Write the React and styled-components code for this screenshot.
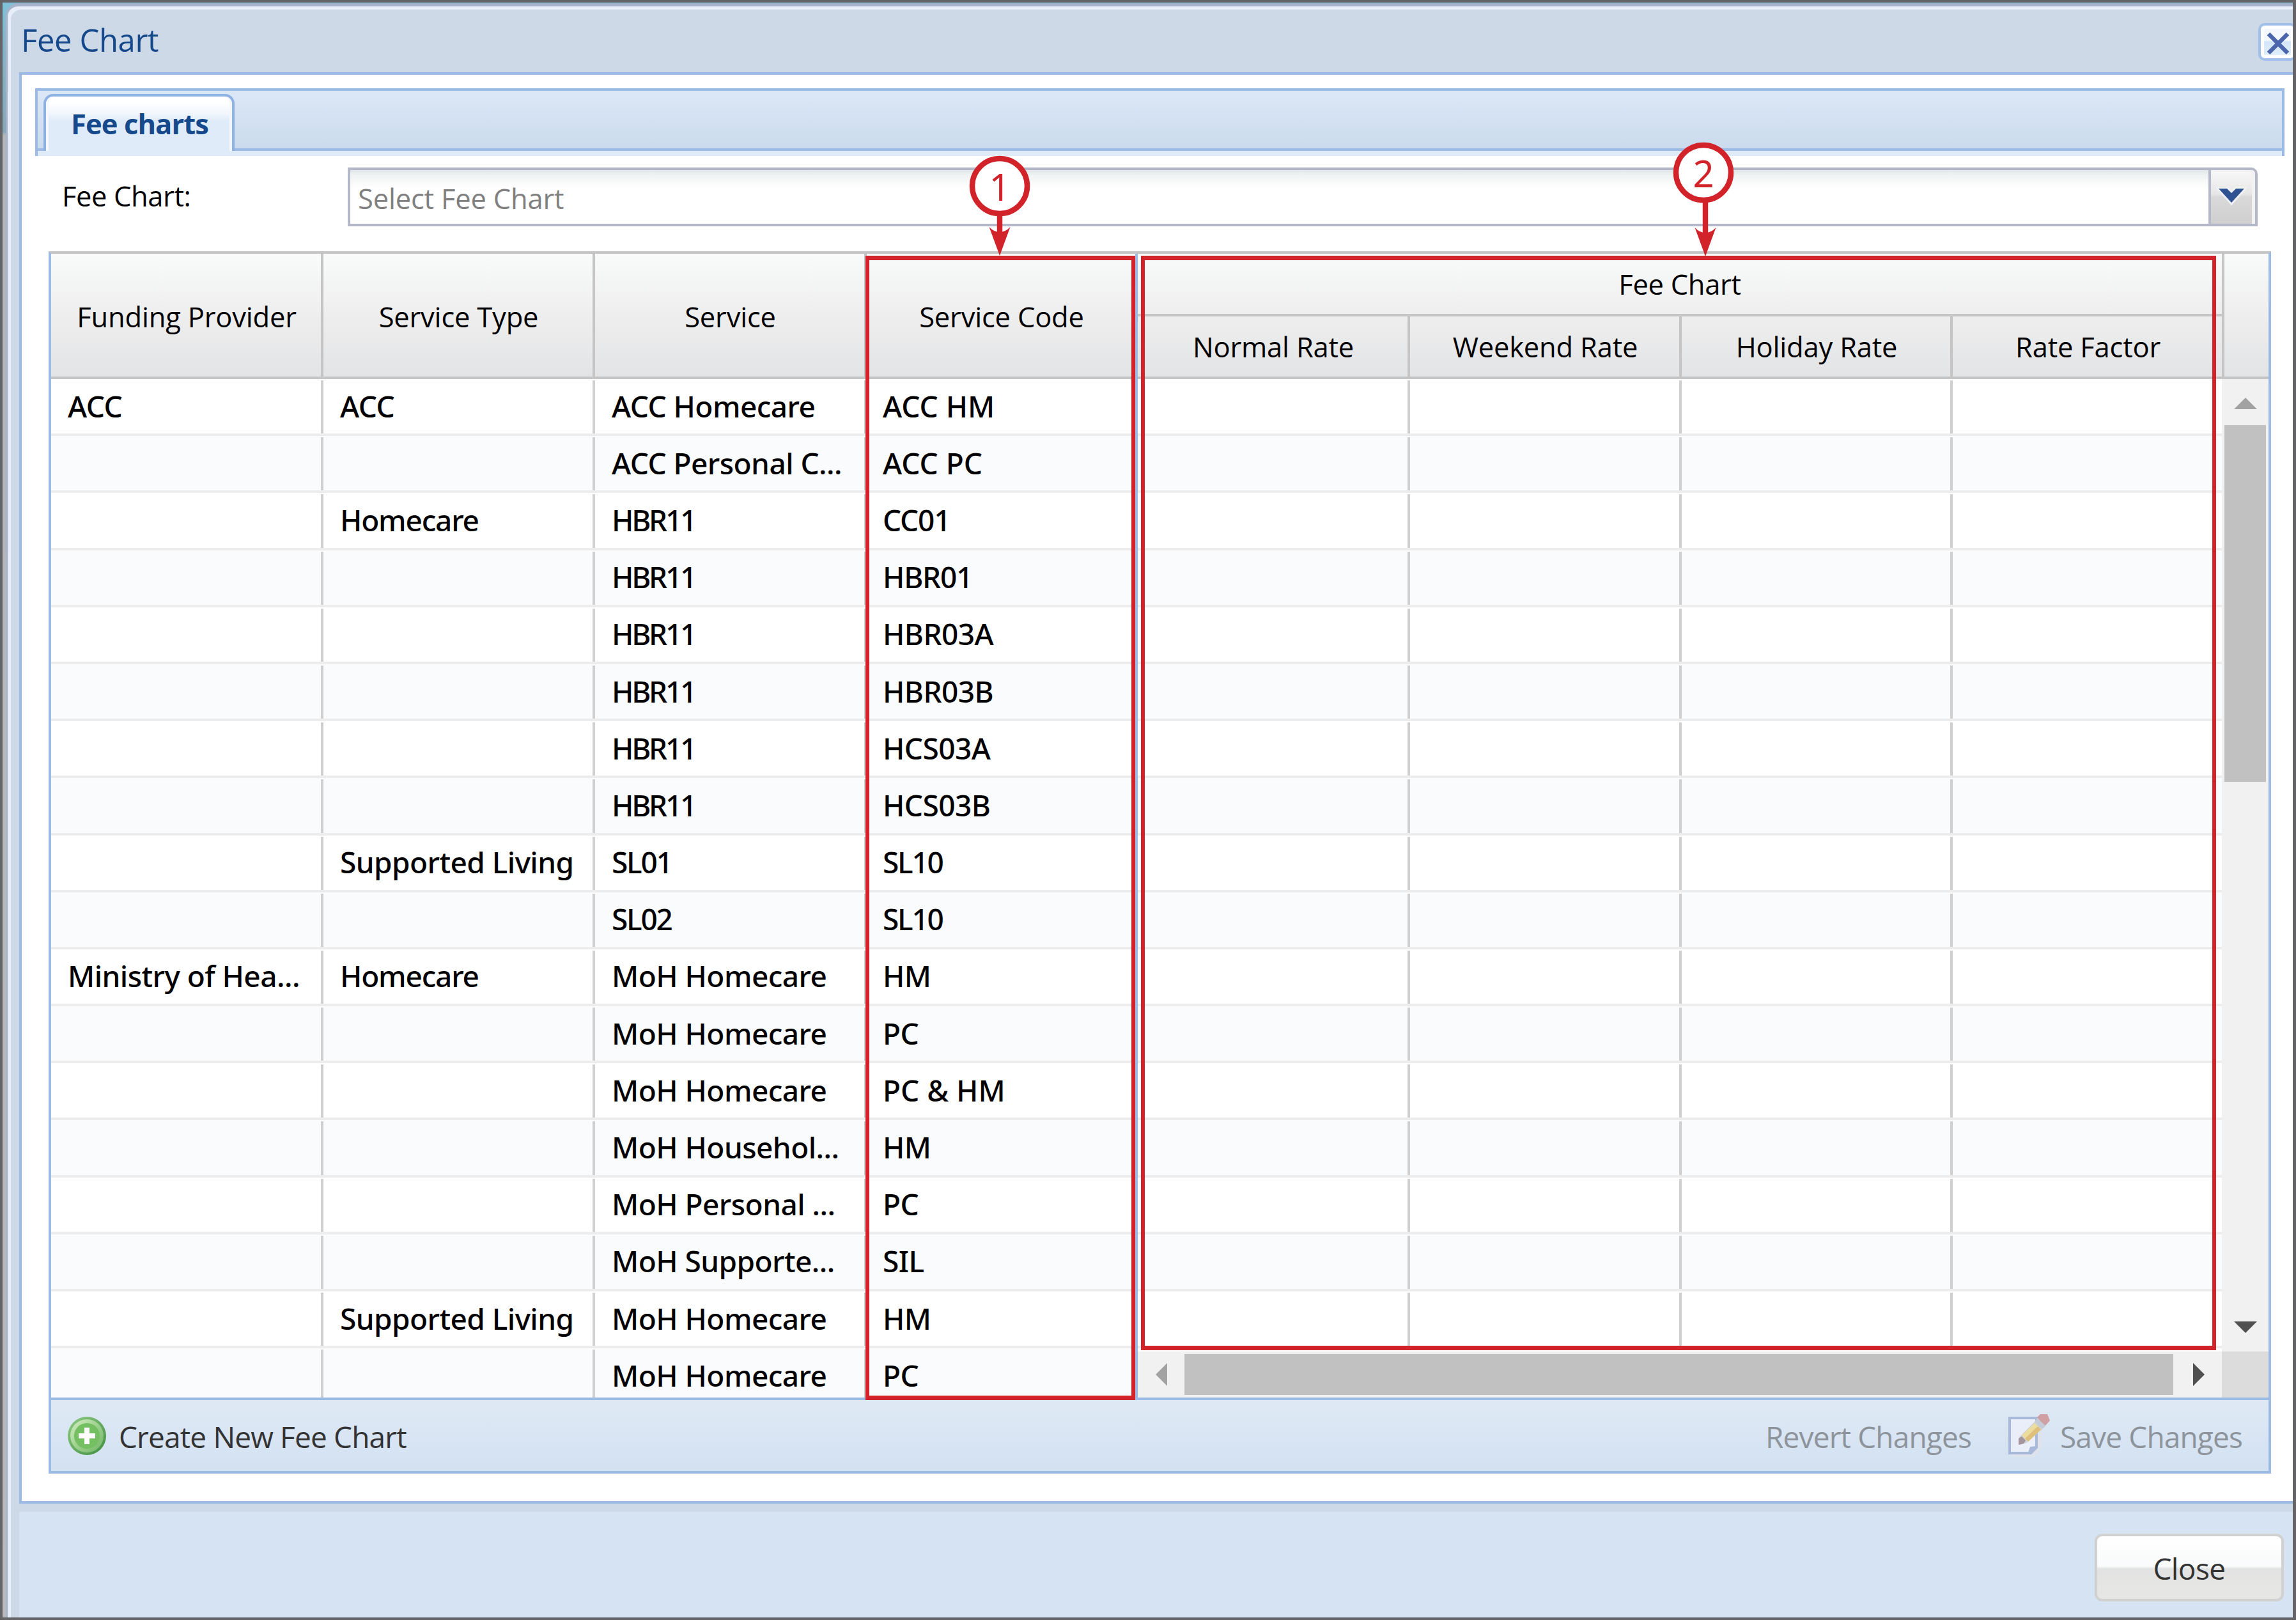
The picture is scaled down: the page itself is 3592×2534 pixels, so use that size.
import React from "react";
import styled, { createGlobalStyle, css } from "styled-components";

const rows = [
  ["ACC", "ACC", "ACC Homecare", "ACC HM"],
  ["", "", "ACC Personal C...", "ACC PC"],
  ["", "Homecare", "HBR11", "CC01"],
  ["", "", "HBR11", "HBR01"],
  ["", "", "HBR11", "HBR03A"],
  ["", "", "HBR11", "HBR03B"],
  ["", "", "HBR11", "HCS03A"],
  ["", "", "HBR11", "HCS03B"],
  ["", "Supported Living", "SL01", "SL10"],
  ["", "", "SL02", "SL10"],
  ["Ministry of Hea...", "Homecare", "MoH Homecare", "HM"],
  ["", "", "MoH Homecare", "PC"],
  ["", "", "MoH Homecare", "PC & HM"],
  ["", "", "MoH Househol...", "HM"],
  ["", "", "MoH Personal ...", "PC"],
  ["", "", "MoH Supporte...", "SIL"],
  ["", "Supported Living", "MoH Homecare", "HM"],
  ["", "", "MoH Homecare", "PC"],
];

const lockedHeaders = [
  "Funding Provider",
  "Service Type",
  "Service",
  "Service Code",
];
const rateHeaders = [
  "Normal Rate",
  "Weekend Rate",
  "Holiday Rate",
  "Rate Factor",
];

function tracking(text) {
  if (text.endsWith("11")) return "-3.2px";
  if (/^SL\d/.test(text)) return "-2.2px";
  if (/^\w+01$/.test(text)) return "-1.2px";
  if (text === "Homecare") return "-1.2px";
  if (/ (HM|PC)$/.test(text)) return "0";
  return "-0.55px";
}

function AddIcon() {
  return (
    <svg width="60" height="62" viewBox="0 0 60 62">
      <defs>
        <linearGradient id="addRim" x1="0" y1="0" x2="1" y2="1">
          <stop offset="0" stopColor="#8fcb83" />
          <stop offset="1" stopColor="#3f8f40" />
        </linearGradient>
        <linearGradient id="addRing" x1="0" y1="0" x2="1" y2="1">
          <stop offset="0" stopColor="#d3eec6" />
          <stop offset="0.5" stopColor="#9ed18d" />
          <stop offset="1" stopColor="#6fb565" />
        </linearGradient>
      </defs>
      <circle cx="30" cy="31" r="30" fill="url(#addRim)" />
      <circle cx="30" cy="31" r="26" fill="url(#addRing)" />
      <circle cx="30" cy="31" r="20" fill="#74bf61" />
      <path d="M26 18h8v9h9v8h-9v9h-8v-9h-9v-8h9z" fill="#fff" />
    </svg>
  );
}

function EditIcon() {
  return (
    <svg width="66" height="68" viewBox="0 0 66 68">
      <path d="M6 8h48v41L42 67H6z" fill="#dfe3ec" />
      <path d="M3 6h42v46L35 61H3z" fill="#e9eef9" stroke="#a9b9d9" strokeWidth="4" />
      <path d="M45 50v5l-8 8h-6l4-12z" fill="#a9b9d9" />
      <path d="M18 36l29-29 12 12-30 26-11 3z" fill="#cfd0d6" />
      <path d="M22 33l20-19 10 10-20 19z" fill="#ecdc9e" />
      <path d="M27 38l20-19 5 5-20 19z" fill="#dfc07a" />
      <path d="M46 5l5-5h11l4 10-8 9z" fill="#cf9fa3" />
      <path d="M42 12l4-6 13 12-5 5z" fill="#c3cbd8" />
      <path d="M17 38l5-3 6 6-3 5-8 2z" fill="#a3949e" />
    </svg>
  );
}

function CloseIcon() {
  return (
    <svg width="38" height="38" viewBox="0 0 38 38">
      <path d="M4 4l30 30M34 4L4 34" stroke="#4c66ae" strokeWidth="6.5" />
    </svg>
  );
}

function Chevron() {
  return (
    <svg width="48" height="34" viewBox="0 0 48 34">
      <path
        d="M4 5h13l7 7 7-7h13L24 27z"
        fill="#2f5392"
        stroke="#eef0f4"
        strokeWidth="6"
        paintOrder="stroke"
      />
    </svg>
  );
}

function Arrow({ dir }) {
  const shapes = {
    up: ["36", "18", "M0 18L18 0l18 18z", "#a2a2a2"],
    down: ["36", "18", "M0 0h36L18 18z", "#505050"],
    left: ["18", "36", "M18 0v36L0 18z", "#a2a2a2"],
    right: ["18", "36", "M0 0l18 18L0 36z", "#505050"],
  };
  const [w, h, d, fill] = shapes[dir];
  return (
    <svg width={w} height={h}>
      <path d={d} fill={fill} />
    </svg>
  );
}

function Callout({ number, left, top, shift, length }) {
  const x = 48 + shift;
  return (
    <CalloutStyled $left={left} $top={top}>
      <svg width="100" height={length} viewBox={`0 0 100 ${length}`}>
        <path d={`M${x} 92V${length - 36}`} stroke="#d2232a" strokeWidth="8.5" />
        <path
          d={`M${x} ${length}L${x - 16.5} ${length - 45}Q${x - 9} ${
            length - 37
          } ${x} ${length - 37}Q${x + 9} ${length - 37} ${x + 16.5} ${
            length - 45
          }z`}
          fill="#d2232a"
        />
        <circle cx="48" cy="48" r="43" fill="#fff" stroke="#d2232a" strokeWidth="8.5" />
      </svg>
      <span>{number}</span>
    </CalloutStyled>
  );
}

function App() {
  return (
    <Screen>
      <GlobalStyle />
      <Dialog>
        <TitleBar>
          <h1>Fee Chart</h1>
          <CloseTool>
            <CloseIcon />
          </CloseTool>
        </TitleBar>
        <Body>
          <TabBar>
            <TabStrip>
              <Tab>Fee charts</Tab>
            </TabStrip>
          </TabBar>
          <FieldRow>
            <label>Fee Chart:</label>
            <Combo>
              <ComboInput>Select Fee Chart</ComboInput>
              <ComboTrigger>
                <Chevron />
              </ComboTrigger>
            </Combo>
          </FieldRow>
          <Grid>
            <Panes>
              <LockedPane>
                <LockedHeader>
                  {lockedHeaders.map((title) => (
                    <HeaderCell key={title}>{title}</HeaderCell>
                  ))}
                </LockedHeader>
                {rows.map((row, i) => (
                  <LockedRow key={i} $alt={i % 2 === 1}>
                    {row.map((text, j) => (
                      <Cell key={j} $tracking={tracking(text)}>
                        {text}
                      </Cell>
                    ))}
                  </LockedRow>
                ))}
              </LockedPane>
              <RatePane>
                <RateHeader>
                  <RateGroup>
                    <GroupTitle>Fee Chart</GroupTitle>
                    <RateColumns>
                      {rateHeaders.map((title) => (
                        <HeaderCell key={title} $sub>
                          {title}
                        </HeaderCell>
                      ))}
                    </RateColumns>
                  </RateGroup>
                </RateHeader>
                <RateBody>
                  <RateRows>
                    {rows.slice(0, 17).map((row, i) => (
                      <RateRow key={i} $alt={i % 2 === 1}>
                        {rateHeaders.map((title) => (
                          <Cell key={title} />
                        ))}
                      </RateRow>
                    ))}
                  </RateRows>
                  <VerticalBar>
                    <Arrow dir="up" />
                    <VerticalThumb />
                    <Arrow dir="down" />
                  </VerticalBar>
                </RateBody>
                <BottomBar>
                  <HorizontalBar>
                    <Arrow dir="left" />
                    <HorizontalThumb />
                    <Arrow dir="right" />
                  </HorizontalBar>
                </BottomBar>
              </RatePane>
            </Panes>
            <GridToolbar>
              <ToolButton>
                <AddIcon />
                <span>Create New Fee Chart</span>
              </ToolButton>
              <ToolGroup>
                <ToolButton $disabled>
                  <span>Revert Changes</span>
                </ToolButton>
                <ToolButton $disabled>
                  <EditIcon />
                  <span>Save Changes</span>
                </ToolButton>
              </ToolGroup>
            </GridToolbar>
          </Grid>
        </Body>
        <Footer>
          <CloseButton>Close</CloseButton>
        </Footer>
      </Dialog>
      <Highlight $left={1354} $top={400} $width={422} $height={1790} />
      <Highlight $left={1785} $top={400} $width={1682} $height={1712} />
      <Callout number="1" left={1516} top={243} shift={0} length={157} />
      <Callout number="2" left={2617} top={222} shift={3} length={179} />
    </Screen>
  );
}

const GlobalStyle = createGlobalStyle`
  * {
    box-sizing: border-box;
  }
  body {
    margin: 0;
  }
  svg {
    display: block;
    flex: none;
  }
`;

const Screen = styled.div`
  position: relative;
  width: 3592px;
  height: 2534px;
  overflow: hidden;
  display: flex;
  font-family: "Open Sans", "Noto Sans", sans-serif;
  font-size: 43.5px;
  color: #000;
  background: linear-gradient(
    #7ec3da 0,
    #86b6c9 60px,
    #86a9b9 206px,
    #b4b6b8 212px,
    #b9b9b9 100%
  );
  &::after {
    content: "";
    position: absolute;
    inset: 0;
    border: solid #646468;
    border-width: 4px 5px 4px 4px;
  }
`;

const Dialog = styled.div`
  flex: 1;
  margin: 5px 0 0 9px;
  padding-right: 5px;
  display: flex;
  flex-direction: column;
  border: solid #a5b4ca;
  border-width: 5px 0 0 3px;
  border-top-left-radius: 20px;
  background: #cdd9e7;
  box-shadow: inset 5px 5px 0 #e7eefa;
`;

const TitleBar = styled.div`
  height: 103px;
  flex: none;
  display: flex;
  align-items: center;
  justify-content: space-between;
  padding-left: 21px;
  h1 {
    margin: 0;
    font-size: 49px;
    font-weight: 400;
    letter-spacing: -0.4px;
    color: #15498b;
  }
`;

const CloseTool = styled.div`
  width: 60px;
  height: 59px;
  margin: 8px -6px 0 0;
  display: flex;
  align-items: center;
  justify-content: center;
  padding: 4px 0 0 1px;
  border: 4px solid #a0c0ea;
  border-radius: 10px;
  background: linear-gradient(#f3f9fe 45%, #d3e6f8 50%, #e3f0fb);
  box-shadow: inset 0 0 0 5px #fff;
`;

const Body = styled.div`
  height: 2239px;
  flex: none;
  margin-left: 18px;
  padding: 21px 13px 0 21px;
  border: solid #9bbbe4;
  border-width: 4px 0 4px 4px;
  background: #fff;
`;

const TabBar = styled.div`
  height: 106px;
  border: 4px solid #9bbbe4;
  border-bottom: none;
  background: #dfebf9;
`;

const TabStrip = styled.div`
  height: 94px;
  display: flex;
  align-items: flex-end;
  padding-left: 9px;
  border-bottom: 4px solid #9bbbe4;
  background: linear-gradient(#dce7f6, #cbdbed);
`;

const Tab = styled.div`
  width: 299px;
  height: 89px;
  margin-bottom: -4px;
  display: flex;
  align-items: center;
  justify-content: center;
  padding-left: 2px;
  border: 4px solid #8db2e3;
  border-bottom: none;
  border-radius: 15px 15px 0 0;
  background: linear-gradient(#fff 10%, #f2f7fd 30%, #dfebf9 45%);
  box-shadow: inset 4px 0 0 #f4f8fd, inset -4px 0 0 #f4f8fd;
  font-weight: 700;
  letter-spacing: -0.9px;
  color: #15498b;
`;

const FieldRow = styled.div`
  height: 149px;
  padding: 18px 42px 0 42px;
  display: flex;
  label {
    width: 447px;
    line-height: 90px;
    letter-spacing: -0.4px;
  }
`;

const Combo = styled.div`
  flex: 1;
  height: 92px;
  display: flex;
  border: 4px solid #b5b8c8;
  border-top-right-radius: 10px;
`;

const ComboInput = styled.div`
  flex: 1;
  padding: 4px 0 0 12px;
  display: flex;
  align-items: center;
  letter-spacing: -0.2px;
  color: #808080;
  background: linear-gradient(#e1e5e7 0, #f0f3f3 8px, #fff 28px);
`;

const ComboTrigger = styled.div`
  width: 73px;
  display: flex;
  align-items: center;
  justify-content: center;
  padding: 0 6px 2px 0;
  border-left: 4px solid #b5b8c8;
  background: linear-gradient(#f8f8f8, #e6e6e6 45%, #d9d9d9 50%, #cfcfcf);
  box-shadow: inset -5px 3px 0 #f2f2f2;
  border-top-right-radius: 6px;
`;

const Grid = styled.div`
  margin: 0 21px;
  height: 1912px;
  display: flex;
  flex-direction: column;
  border: 4px solid #9bbbe4;
  border-top-color: #c5c5c5;
`;

const Panes = styled.div`
  height: 1789px;
  display: flex;
  overflow: hidden;
`;

const headerFill = css`
  height: 196px;
  flex: none;
  border-bottom: 4px solid #c5c5c5;
  background: linear-gradient(#f9fafa, #eeeeee 50%, #e3e4e6);
`;

const LockedPane = styled.div`
  width: 1700px;
  flex: none;
  border-right: 4px solid #9bbbe4;
`;

const LockedHeader = styled.div`
  ${headerFill}
  display: grid;
  grid-template-columns: 426px 425px 425px 1fr;
`;

const HeaderCell = styled.div`
  display: flex;
  align-items: center;
  justify-content: center;
  padding: ${({ $sub }) => ($sub ? "0 0 0 2px" : "4px 0 0 2px")};
  letter-spacing: -0.2px;
  border-right: 4px solid #c5c5c5;
  &:last-child {
    border-right: none;
  }
`;

const Row = styled.div`
  height: 89.2px;
  display: grid;
  border-bottom: 4px solid #ededed;
  background: ${({ $alt }) => ($alt ? "#fafbfd" : "#fff")};
`;

const LockedRow = styled(Row)`
  grid-template-columns: 426px 425px 425px 1fr;
`;

const RateRow = styled(Row)`
  grid-template-columns: 426px 425px 424px 1fr;
`;

const Cell = styled.div`
  margin-top: 2px;
  padding: 0 0 4px 26px;
  display: flex;
  align-items: center;
  white-space: pre;
  font-family: "Noto Sans", sans-serif;
  font-size: 46px;
  font-weight: 500;
  letter-spacing: ${({ $tracking }) => $tracking};
  border-right: 4px solid #d0d0d0;
  &:last-child {
    border-right: none;
    padding-left: 25px;
  }
`;

const RatePane = styled.div`
  flex: 1;
  display: flex;
  flex-direction: column;
`;

const RateHeader = styled.div`
  ${headerFill}
`;

const RateGroup = styled.div`
  width: 1700px;
  height: 192px;
  display: flex;
  flex-direction: column;
  border-right: 4px solid #c5c5c5;
`;

const GroupTitle = styled.div`
  height: 98px;
  display: flex;
  align-items: center;
  justify-content: center;
  letter-spacing: -0.3px;
  border-bottom: 4px solid #c5c5c5;
`;

const RateColumns = styled.div`
  flex: 1;
  display: grid;
  grid-template-columns: 426px 425px 424px 1fr;
`;

const RateBody = styled.div`
  height: 1521px;
  display: flex;
`;

const RateRows = styled.div`
  flex: 1;
`;

const VerticalBar = styled.div`
  width: 73px;
  padding: 29px 0;
  display: flex;
  flex-direction: column;
  align-items: center;
  background: #f1f1f1;
`;

const VerticalThumb = styled.div`
  width: 65px;
  height: 558px;
  margin: 25px 0 auto;
  background: #c1c1c1;
`;

const BottomBar = styled.div`
  flex: 1;
  display: flex;
  background: #dcdcdc;
`;

const HorizontalBar = styled.div`
  width: 1696px;
  padding: 0 27px 0 28px;
  display: flex;
  align-items: center;
  justify-content: space-between;
  background: #f1f1f1;
`;

const HorizontalThumb = styled.div`
  width: 1547px;
  height: 64px;
  margin-right: 4px;
  background: #c1c1c1;
`;

const GridToolbar = styled.div`
  flex: 1;
  padding: 0 41px 0 26px;
  display: flex;
  align-items: center;
  justify-content: space-between;
  border-top: 4px solid #9bbbe4;
  background: linear-gradient(#dfe9f5, #d3e1f1);
`;

const ToolGroup = styled.div`
  display: flex;
  gap: 57px;
`;

const ToolButton = styled.div`
  display: flex;
  align-items: center;
  gap: ${({ $disabled }) => ($disabled ? "16px" : "20px")};
  font-size: 46px;
  letter-spacing: -0.85px;
  color: ${({ $disabled }) => ($disabled ? "#8d949c" : "#333")};
  span {
    padding-top: 3px;
  }
`;

const Footer = styled.div`
  flex: 1;
  margin: 13px 0 0 18px;
  padding: 34px 14px 0 0;
  display: flex;
  justify-content: flex-end;
  align-items: flex-start;
  background: #d6e3f3;
`;

const CloseButton = styled.div`
  width: 296px;
  height: 106px;
  display: flex;
  align-items: center;
  justify-content: center;
  padding-top: 2px;
  border: 4px solid #d1d1d1;
  border-radius: 12px;
  background: linear-gradient(#fff, #f9fafb 48%, #e2e2e2 52%, #e7e7e5);
  font-size: 46px;
  letter-spacing: -0.6px;
  color: #333;
`;

const Highlight = styled.div`
  position: absolute;
  left: ${({ $left }) => $left}px;
  top: ${({ $top }) => $top}px;
  width: ${({ $width }) => $width}px;
  height: ${({ $height }) => $height}px;
  border: solid #d2232a;
  border-width: 7px 6px;
`;

const CalloutStyled = styled.div`
  position: absolute;
  left: ${({ $left }) => $left}px;
  top: ${({ $top }) => $top}px;
  span {
    position: absolute;
    top: 0;
    left: 0;
    width: 96px;
    text-align: center;
    font-family: "Noto Sans", sans-serif;
    font-size: 58px;
    line-height: 97px;
    color: #d2232a;
  }
`;

export default App;
